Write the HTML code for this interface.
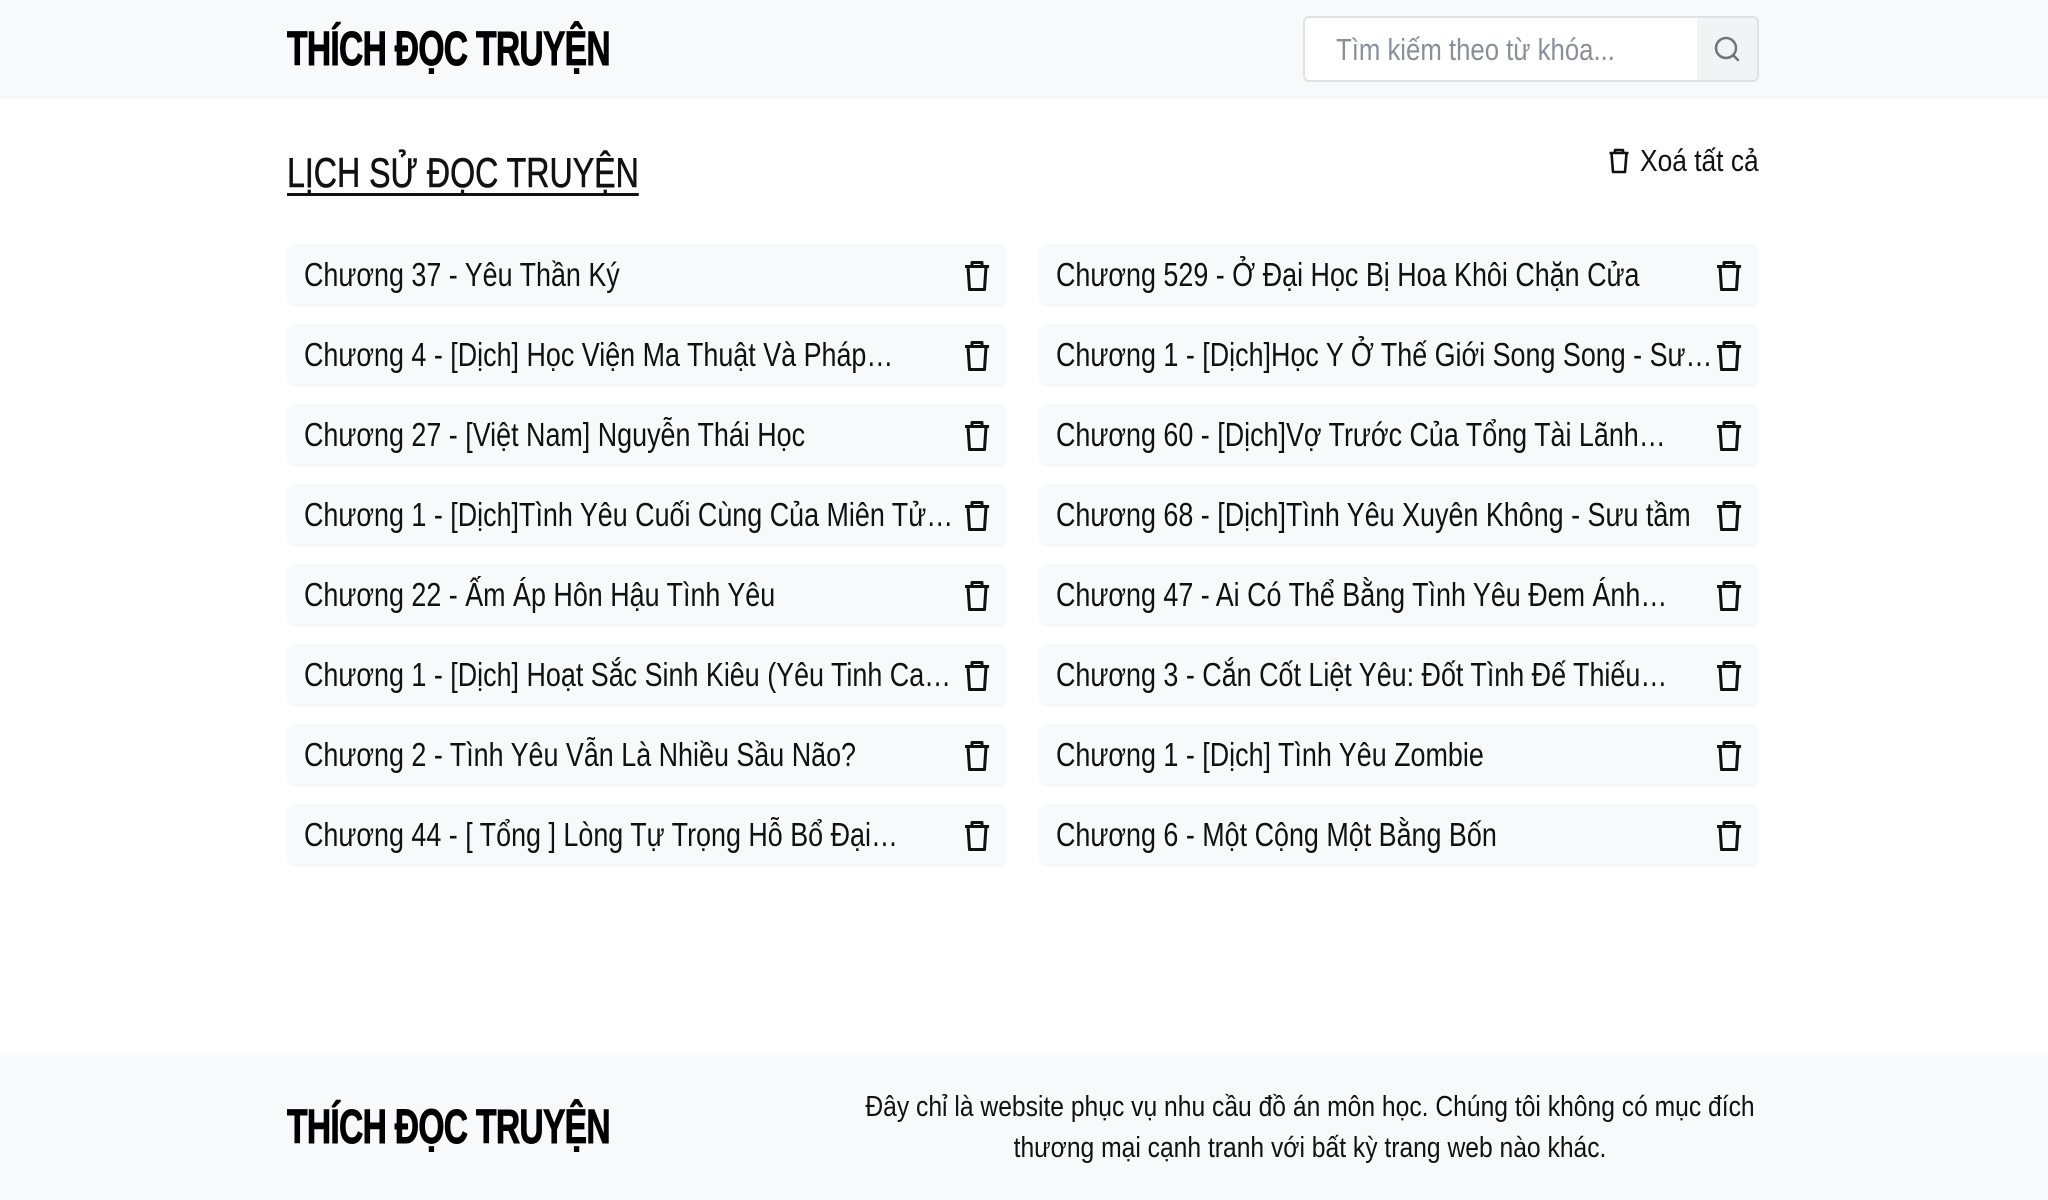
<!DOCTYPE html>
<html><head><meta charset="utf-8"><style>
*{box-sizing:border-box;margin:0;padding:0}
body{width:2048px;height:1200px;background:#fff;font-family:"Liberation Sans",sans-serif;color:#111;position:relative;overflow:hidden}
.hdr{position:absolute;left:0;top:0;width:2048px;height:99px;background:#f8f9fa}
.logo{position:absolute;font-weight:900;font-size:48px;letter-spacing:-1px;color:#000;white-space:nowrap;transform:scaleX(0.70);transform-origin:left;-webkit-text-stroke:1px #000}
.search{position:absolute;left:1303px;top:16px;width:456px;height:66px;border:2px solid #dee2e6;border-radius:6px;background:#fff;overflow:hidden}
.search span{position:absolute;left:31px;top:14px;font-size:31px;color:#8a9099;transform:scaleX(0.83);transform-origin:left;white-space:nowrap}
.search .btn{position:absolute;right:0;top:0;width:60px;height:100%;background:#f1f3f5}
h1{position:absolute;left:287px;top:149px;font-size:42px;font-weight:normal;text-decoration:underline;text-decoration-thickness:3px;text-underline-offset:6px;color:#111;transform:scaleX(0.765);transform-origin:left;white-space:nowrap;-webkit-text-stroke:0.6px #111}
.clear{position:absolute;left:1608px;top:143px;display:flex;align-items:center;gap:10px}
.clear span{font-size:31px;transform:scaleX(0.85);transform-origin:left;white-space:nowrap}
.row{position:absolute;height:63px;width:720px;background:#f8f9fa;border-radius:8px}
.row span{position:absolute;left:17px;top:12px;font-size:33px;white-space:nowrap;color:#111;transform:scaleX(0.815);transform-origin:left}
.row svg{position:absolute;right:15px;top:16px}
.ftr{position:absolute;left:0;top:1055px;width:2048px;height:145px;background:#f8f9fa}
.ftxt{position:absolute;left:763px;top:1087px;width:1094px;text-align:center;font-size:29px;line-height:41px;color:#111;transform:scaleX(0.85);transform-origin:center}
</style></head><body>
<div class="hdr"></div>
<div class="logo" style="left:287px;top:22px">THÍCH ĐỌC TRUYỆN</div>
<div class="search"><span>Tìm kiếm theo từ khóa...</span><div class="btn"><svg width="60" height="62" viewBox="0 0 60 62"><circle cx="29" cy="30" r="10" fill="none" stroke="#6c757d" stroke-width="2.5"/><line x1="36" y1="37" x2="41" y2="42" stroke="#6c757d" stroke-width="2.5" stroke-linecap="round"/></svg></div></div>
<h1>LỊCH SỬ ĐỌC TRUYỆN</h1>
<div class="clear"><svg width="22" height="26" viewBox="0 0 22 26"><path d="M7 5V2h8v3M1.5 5h19M3.5 5l1.5 19h12l1.5-19" fill="none" stroke="#111" stroke-width="2.6" stroke-linejoin="round"/></svg><span>Xoá tất cả</span></div>
<div id="rows"></div>
<script>
var L=["Chương 37 - Yêu Thần Ký","Chương 4 - [Dịch] Học Viện Ma Thuật Và Pháp…","Chương 27 - [Việt Nam] Nguyễn Thái Học","Chương 1 - [Dịch]Tình Yêu Cuối Cùng Của Miên Tử…","Chương 22 - Ấm Áp Hôn Hậu Tình Yêu","Chương 1 - [Dịch] Hoạt Sắc Sinh Kiêu (Yêu Tinh Ca…","Chương 2 - Tình Yêu Vẫn Là Nhiều Sầu Não?","Chương 44 - [ Tổng ] Lòng Tự Trọng Hỗ Bổ Đại…"];
var R=["Chương 529 - Ở Đại Học Bị Hoa Khôi Chặn Cửa","Chương 1 - [Dịch]Học Y Ở Thế Giới Song Song - Sư…","Chương 60 - [Dịch]Vợ Trước Của Tổng Tài Lãnh…","Chương 68 - [Dịch]Tình Yêu Xuyên Không - Sưu tầm","Chương 47 - Ai Có Thể Bằng Tình Yêu Đem Ánh…","Chương 3 - Cắn Cốt Liệt Yêu: Đốt Tình Đế Thiếu…","Chương 1 - [Dịch] Tình Yêu Zombie","Chương 6 - Một Cộng Một Bằng Bốn"];
var ic='<svg width="30" height="32" viewBox="0 0 30 32"><path d="M10 6V2.5h10V6M3 6.5h24M6 6.5l1.5 23h15l1.5-23" fill="none" stroke="#111" stroke-width="3" stroke-linejoin="round"/></svg>';
var h='';
for(var i=0;i<8;i++){var y=244+i*80;
h+='<div class="row" style="left:287px;top:'+y+'px"><span>'+L[i]+'</span>'+ic+'</div>';
h+='<div class="row" style="left:1039px;top:'+y+'px"><span>'+R[i]+'</span>'+ic+'</div>';}
document.getElementById('rows').innerHTML=h;
</script>
<div class="ftr"></div>
<div class="logo" style="left:287px;top:1100px">THÍCH ĐỌC TRUYỆN</div>
<div class="ftxt">Đây chỉ là website phục vụ nhu cầu đồ án môn học. Chúng tôi không có mục đích thương mại cạnh tranh với bất kỳ trang web nào khác.</div>
</body></html>
